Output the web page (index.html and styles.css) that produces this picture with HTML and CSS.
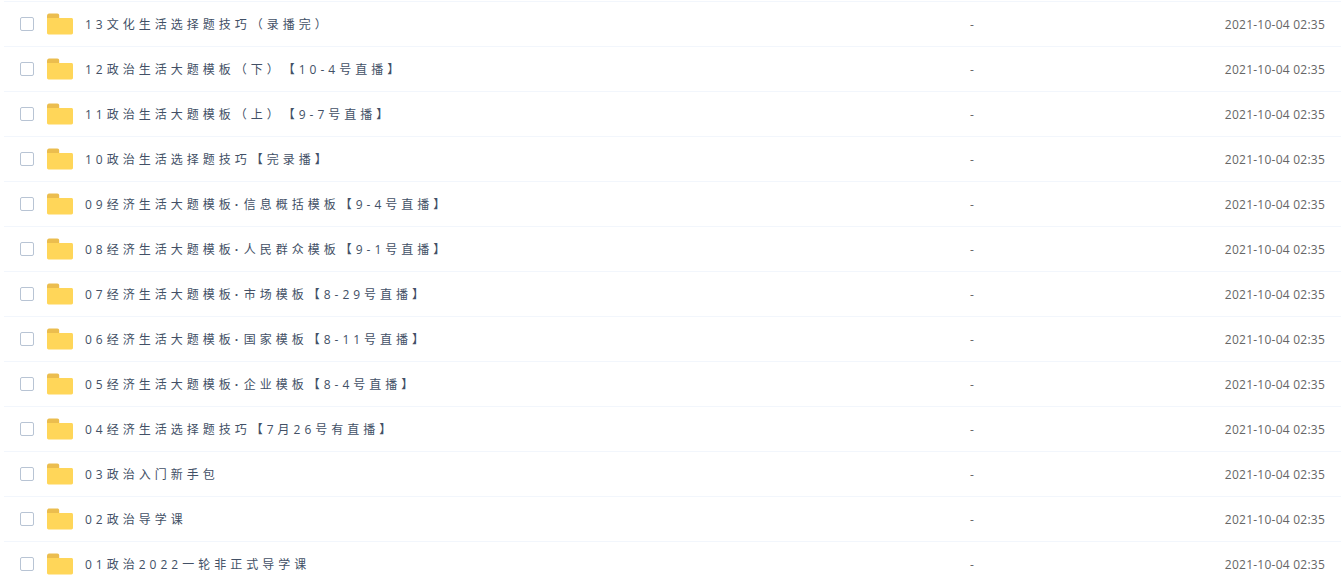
FILE: index.html
```html
<!DOCTYPE html>
<html lang="zh-CN">
<head>
<meta charset="utf-8">
<title>文件列表</title>
<link rel="stylesheet" href="styles.css">
</head>
<body>
<svg class="defs" width="0" height="0" aria-hidden="true">
  <symbol id="folder" viewBox="0 0 26 22">
    <path d="M0 3.2C0 1.4 .9.5 2 .5h8.200c1.400 0 2 .7 2 2V5H0z" fill="#ebbd4e"/>
    <path d="M0 5h24.400c1 0 1.600.6 1.600 1.600v13.200c0 1-.6 1.700-1.600 1.700H1.600C.6 21.500 0 20.800 0 19.800z" fill="#ffd659"/>
  </symbol>
</svg>
<main class="list">
  <div class="row"><span class="check"></span><svg class="folder"><use href="#folder"/></svg><span class="name">13文化生活选择题技巧（录播完）</span><span class="size">-</span><span class="date">2021-10-04 02:35</span></div>
  <div class="row"><span class="check"></span><svg class="folder"><use href="#folder"/></svg><span class="name">12政治生活大题模板（下）【10-4号直播】</span><span class="size">-</span><span class="date">2021-10-04 02:35</span></div>
  <div class="row"><span class="check"></span><svg class="folder"><use href="#folder"/></svg><span class="name">11政治生活大题模板（上）【9-7号直播】</span><span class="size">-</span><span class="date">2021-10-04 02:35</span></div>
  <div class="row"><span class="check"></span><svg class="folder"><use href="#folder"/></svg><span class="name">10政治生活选择题技巧【完录播】</span><span class="size">-</span><span class="date">2021-10-04 02:35</span></div>
  <div class="row"><span class="check"></span><svg class="folder"><use href="#folder"/></svg><span class="name">09经济生活大题模板<span class="dot">·</span>信息概括模板【9-4号直播】</span><span class="size">-</span><span class="date">2021-10-04 02:35</span></div>
  <div class="row"><span class="check"></span><svg class="folder"><use href="#folder"/></svg><span class="name">08经济生活大题模板<span class="dot">·</span>人民群众模板【9-1号直播】</span><span class="size">-</span><span class="date">2021-10-04 02:35</span></div>
  <div class="row"><span class="check"></span><svg class="folder"><use href="#folder"/></svg><span class="name">07经济生活大题模板<span class="dot">·</span>市场模板【8-29号直播】</span><span class="size">-</span><span class="date">2021-10-04 02:35</span></div>
  <div class="row"><span class="check"></span><svg class="folder"><use href="#folder"/></svg><span class="name">06经济生活大题模板<span class="dot">·</span>国家模板【8-11号直播】</span><span class="size">-</span><span class="date">2021-10-04 02:35</span></div>
  <div class="row"><span class="check"></span><svg class="folder"><use href="#folder"/></svg><span class="name">05经济生活大题模板<span class="dot">·</span>企业模板【8-4号直播】</span><span class="size">-</span><span class="date">2021-10-04 02:35</span></div>
  <div class="row"><span class="check"></span><svg class="folder"><use href="#folder"/></svg><span class="name">04经济生活选择题技巧【7月26号有直播】</span><span class="size">-</span><span class="date">2021-10-04 02:35</span></div>
  <div class="row"><span class="check"></span><svg class="folder"><use href="#folder"/></svg><span class="name">03政治入门新手包</span><span class="size">-</span><span class="date">2021-10-04 02:35</span></div>
  <div class="row"><span class="check"></span><svg class="folder"><use href="#folder"/></svg><span class="name">02政治导学课</span><span class="size">-</span><span class="date">2021-10-04 02:35</span></div>
  <div class="row"><span class="check"></span><svg class="folder"><use href="#folder"/></svg><span class="name">01政治2022一轮非正式导学课</span><span class="size">-</span><span class="date">2021-10-04 02:35</span></div>
</main>
</body>
</html>
```
FILE: styles.css
```css
html, body {
  margin: 0;
  height: 575px;
  overflow: hidden;
  background: #fff;
}
.defs {
  position: absolute;
}
.list {
  padding: 1px 0 0 4px;
  font-family: "Open Sans", "Noto Sans CJK SC", sans-serif;
  font-size: 12px;
  text-spacing-trim: space-all;
}
.row {
  display: flex;
  align-items: center;
  height: 44px;
  border-top: 1px solid #f2f6fc;
}
.check {
  flex: none;
  width: 14px;
  height: 14px;
  margin-left: 16px;
  box-sizing: border-box;
  border: 1px solid #b8c4d4;
  border-radius: 2px;
  background: #fff;
}
.folder {
  flex: none;
  width: 26px;
  height: 22px;
  margin-left: 13px;
}
.name {
  flex: none;
  width: 885px;
  margin-left: 12px;
  padding-top: 2px;
  line-height: 18px;
  color: #425066;
  letter-spacing: 4px;
  white-space: nowrap;
}
.dot {
  font-weight: 700;
  letter-spacing: 5.500px;
}
.size {
  flex: none;
  width: 100px;
  color: #666;
}
.date {
  flex: 1;
  padding-right: 16px;
  text-align: right;
  letter-spacing: .24px;
  color: #666;
}
```
